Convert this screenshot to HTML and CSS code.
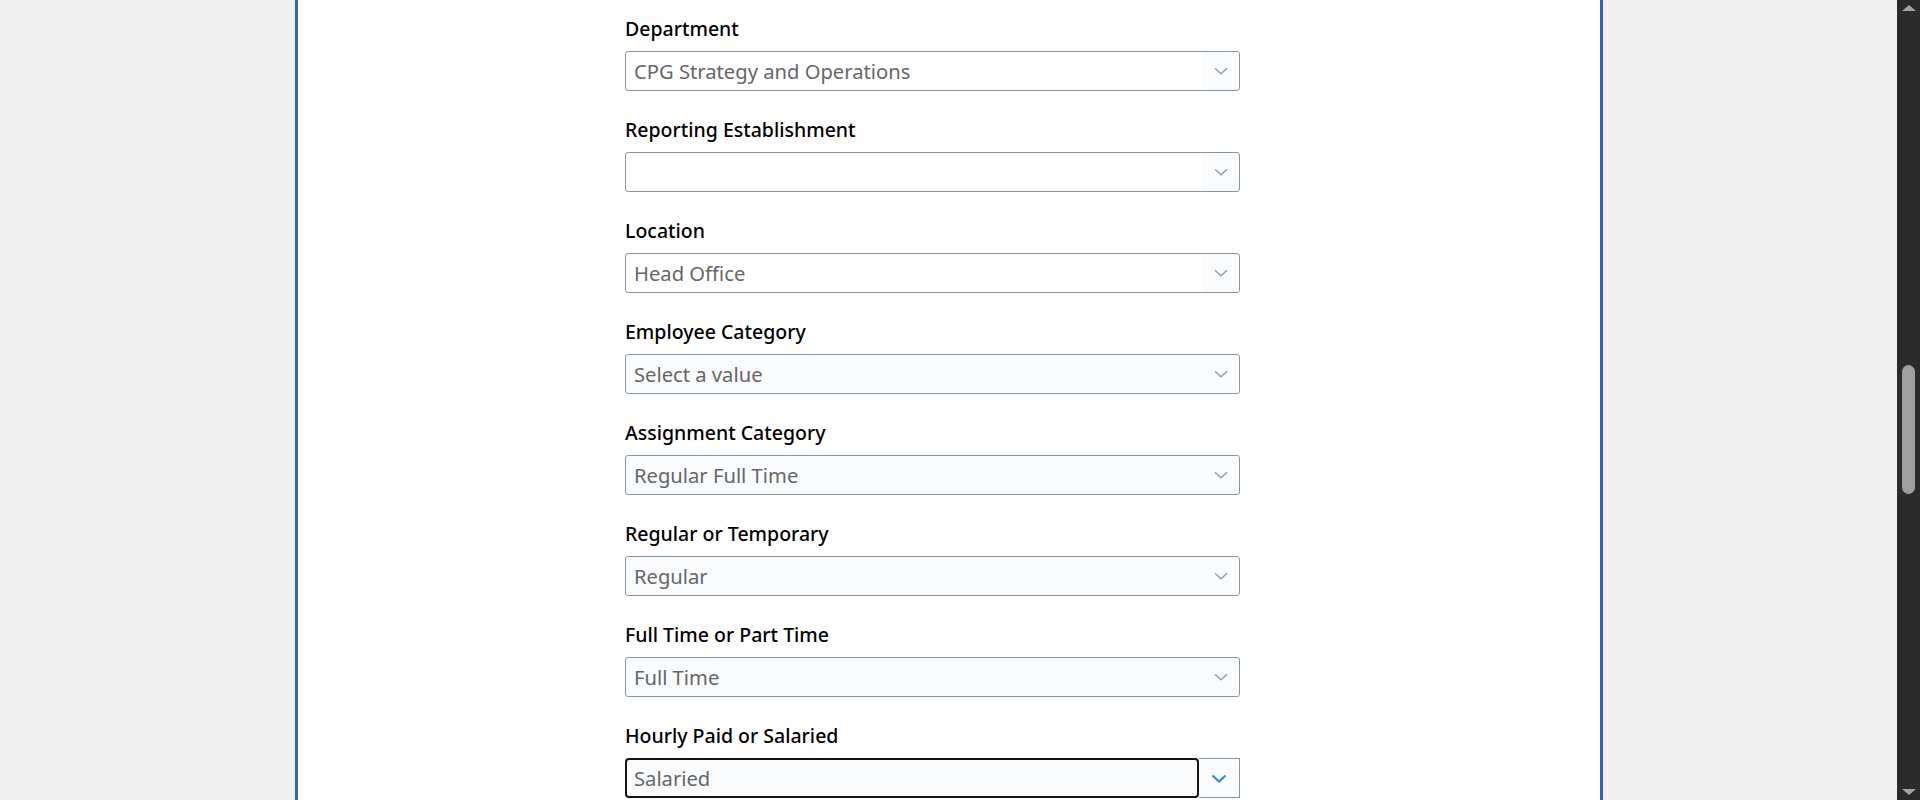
FILE: index.html
```html
<!DOCTYPE html>
<html lang="en">
<head>
<meta charset="utf-8">
<title>Assignment details</title>
<link rel="stylesheet" href="styles.css">
</head>
<body>
<div class="screen">
  <main class="viewport">
    <div class="card">
      <form class="form">
        <div class="field">
          <label class="label">Department</label>
          <div class="select plain">
            <span class="value">CPG Strategy and Operations</span>
            <span class="chev"><svg width="14" height="8" viewBox="0 0 14 8"><path d="M1 1.2 L7 6.8 L13 1.2" fill="none" stroke="#949da6" stroke-width="1.5"/></svg></span>
          </div>
        </div>
        <div class="field">
          <label class="label">Reporting Establishment</label>
          <div class="select plain">
            <span class="value"></span>
            <span class="chev"><svg width="14" height="8" viewBox="0 0 14 8"><path d="M1 1.2 L7 6.8 L13 1.2" fill="none" stroke="#949da6" stroke-width="1.5"/></svg></span>
          </div>
        </div>
        <div class="field">
          <label class="label">Location</label>
          <div class="select plain">
            <span class="value">Head Office</span>
            <span class="chev"><svg width="14" height="8" viewBox="0 0 14 8"><path d="M1 1.2 L7 6.8 L13 1.2" fill="none" stroke="#949da6" stroke-width="1.5"/></svg></span>
          </div>
        </div>
        <div class="field">
          <label class="label">Employee Category</label>
          <div class="select tinted">
            <span class="value">Select a value</span>
            <span class="chev"><svg width="14" height="8" viewBox="0 0 14 8"><path d="M1 1.2 L7 6.8 L13 1.2" fill="none" stroke="#949da6" stroke-width="1.5"/></svg></span>
          </div>
        </div>
        <div class="field">
          <label class="label">Assignment Category</label>
          <div class="select tinted">
            <span class="value">Regular Full Time</span>
            <span class="chev"><svg width="14" height="8" viewBox="0 0 14 8"><path d="M1 1.2 L7 6.8 L13 1.2" fill="none" stroke="#949da6" stroke-width="1.5"/></svg></span>
          </div>
        </div>
        <div class="field">
          <label class="label">Regular or Temporary</label>
          <div class="select tinted">
            <span class="value">Regular</span>
            <span class="chev"><svg width="14" height="8" viewBox="0 0 14 8"><path d="M1 1.2 L7 6.8 L13 1.2" fill="none" stroke="#949da6" stroke-width="1.5"/></svg></span>
          </div>
        </div>
        <div class="field">
          <label class="label">Full Time or Part Time</label>
          <div class="select tinted">
            <span class="value">Full Time</span>
            <span class="chev"><svg width="14" height="8" viewBox="0 0 14 8"><path d="M1 1.2 L7 6.8 L13 1.2" fill="none" stroke="#949da6" stroke-width="1.5"/></svg></span>
          </div>
        </div>
        <div class="field">
          <label class="label">Hourly Paid or Salaried</label>
          <div class="select focused">
            <span class="value">Salaried</span>
            <span class="chev"><svg width="16" height="9" viewBox="0 0 16 9"><path d="M1.5 1.5 L8 7.5 L14.5 1.5" fill="none" stroke="#3a86da" stroke-width="2.2"/></svg></span>
          </div>
        </div>
      </form>
    </div>
  </main>
  <div class="scrollbar">
    <span class="arrow up"></span>
    <div class="track"><span class="thumb"></span></div>
    <span class="arrow down"></span>
  </div>
</div>
</body>
</html>
```
FILE: styles.css
```css
html, body {
  margin: 0;
  height: 800px;
  overflow: hidden;
}
body {
  font-family: "Noto Sans", "Open Sans", sans-serif;
  background: #f0f0f0;
}
.screen {
  display: flex;
  height: 800px;
}
.viewport {
  flex: 1;
  display: flex;
  padding-left: 295px;
  overflow: hidden;
}
.card {
  width: 1302px;
  flex: none;
  border-left: 3px solid #2f64bd;
  border-right: 3px solid #2f64bd;
  background: #fff;
}
.form {
  width: 615px;
  margin-left: 327px;
  padding-top: 15px;
}
.field {
  margin-bottom: 25px;
}
.label {
  display: block;
  font-size: 19.5px;
  font-weight: 500;
  line-height: 26px;
  color: #000;
  padding-top: 1px;
  margin-bottom: 9px;
}
.select {
  display: flex;
  height: 40px;
  box-sizing: border-box;
  border: 1px solid #8795a1;
  border-radius: 3px;
  background: #fff;
}
.value {
  flex: 1;
  padding-left: 8px;
  font-size: 20.2px;
  line-height: 38px;
  color: #666666;
  white-space: nowrap;
}
.chev {
  width: 36px;
  display: flex;
  align-items: center;
  justify-content: center;
  background: #fafbfd;
  border-radius: 0 3px 3px 0;
}
.select.tinted {
  background: #f9fbfd;
}
.select.focused {
  border: none;
  background: transparent;
}
.select.focused .value {
  box-sizing: border-box;
  border: 2px solid #141414;
  border-radius: 4px;
  background: #f9fbfd;
  padding-left: 7px;
  line-height: 36px;
}
.select.focused .chev {
  width: 41px;
  box-sizing: border-box;
  border: 1px solid #8795a1;
  border-left: none;
  border-radius: 0;
  background: #f9fbfd;
}
.scrollbar {
  width: 23px;
  flex: none;
  background: #2b2b2b;
  display: flex;
  flex-direction: column;
  align-items: center;
}
.track {
  flex: 1;
  width: 100%;
  display: flex;
  justify-content: center;
  padding-top: 354px;
}
.thumb {
  width: 13px;
  height: 129px;
  border-radius: 7px;
  background: #9f9f9f;
}
.arrow {
  width: 0;
  height: 0;
  border-left: 7px solid transparent;
  border-right: 7px solid transparent;
}
.arrow.up {
  margin-top: 5px;
  border-bottom: 6px solid #a3a3a3;
}
.arrow.down {
  margin-bottom: 5px;
  border-top: 6px solid #a3a3a3;
}
```
